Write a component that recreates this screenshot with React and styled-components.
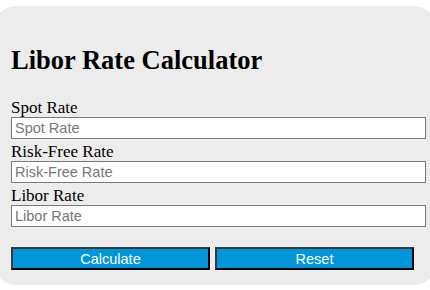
import React from 'react';
import styled, {createGlobalStyle} from 'styled-components';

const GlobalStyle = createGlobalStyle`
  html, body {
    margin: 0;
    padding: 0;
    background: #ffffff;
    overflow: hidden;
  }
`;

const Card = styled.div`
  margin: 6px -6px 0 -6px;
  padding: 20px 10px 15px 17px;
  background: #ececec;
  border-radius: 22px;
  font-family: "Liberation Serif", "Times New Roman", serif;
  color: #000;
`;

const Title = styled.h2`
  margin: 19px 0 23px 0;
  font-size: 26.5px;
  line-height: 30px;
  font-weight: bold;
`;

const Field = styled.div`
  display: flex;
  flex-direction: column;
  margin-bottom: 3px;
`;

const Label = styled.label`
  font-size: 17px;
  line-height: 19px;
`;

const Input = styled.input`
  box-sizing: border-box;
  width: 100%;
  height: 22px;
  margin: 0;
  padding: 0 3px;
  border: 1px solid #7a7a7a;
  border-radius: 0;
  background: #fff;
  font-family: "Liberation Sans", Arial, sans-serif;
  font-size: 14.5px;
  color: #000;
  outline: none;

  &::placeholder {
    color: #777;
  }
`;

const Buttons = styled.div`
  display: flex;
  gap: 5px;
  margin-top: 20px;
`;

const Button = styled.button`
  box-sizing: border-box;
  width: 199px;
  height: 23px;
  padding: 0;
  background: #0096d9;
  color: #fff;
  border: 2px solid;
  border-color: #3a3a3a #000 #000 #3a3a3a;
  font-family: "Liberation Sans", Arial, sans-serif;
  font-size: 14.5px;
  line-height: 18px;
  cursor: pointer;
`;

const fields = ['Spot Rate', 'Risk-Free Rate', 'Libor Rate'];

function App() {
  return (
    <>
      <GlobalStyle />
      <Card>
        <Title>Libor Rate Calculator</Title>
        {fields.map((name) => (
          <Field key={name}>
            <Label>{name}</Label>
            <Input type="text" placeholder={name} />
          </Field>
        ))}
        <Buttons>
          <Button>Calculate</Button>
          <Button>Reset</Button>
        </Buttons>
      </Card>
    </>
  );
}

export default App;
